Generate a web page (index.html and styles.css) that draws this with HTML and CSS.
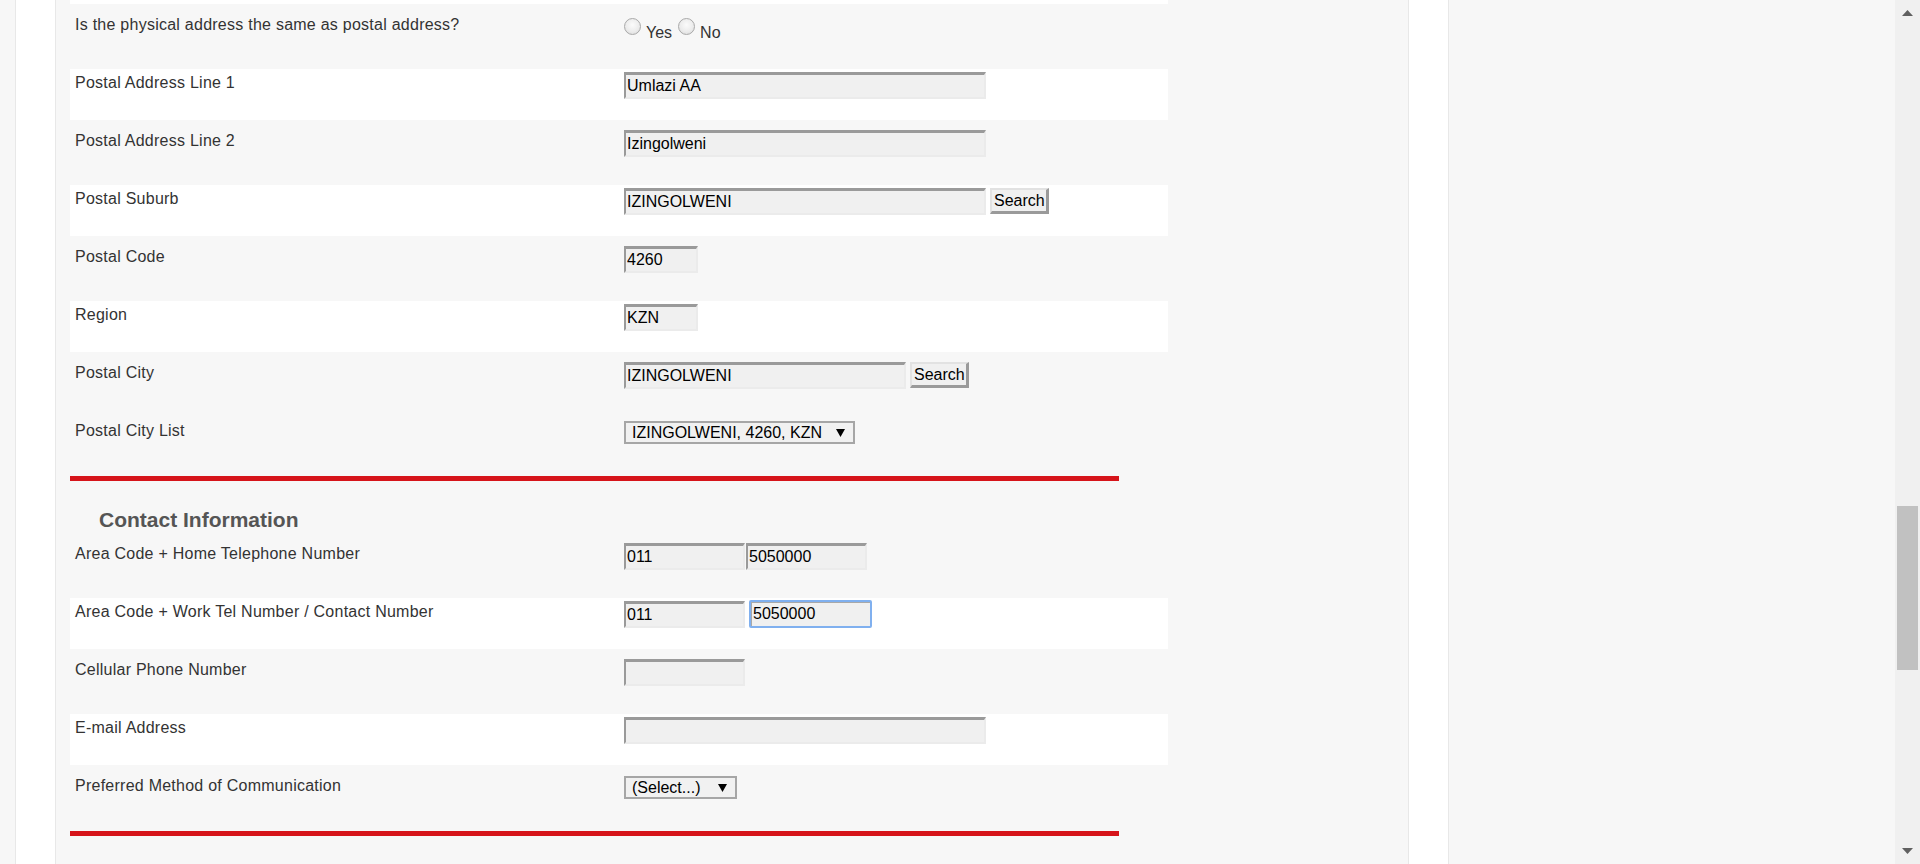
FILE: index.html
```html
<!DOCTYPE html>
<html lang="en">
<head>
<meta charset="utf-8">
<title>Postal and Contact Information</title>
<link rel="stylesheet" href="styles.css">
</head>
<body>
<div class="viewport">
  <div class="frame">
    <div class="panel">
      <div class="row-tail"></div>
      <div class="rows">
        <div class="row">
          <div class="label">Is the physical address the same as postal address?</div>
          <div class="value radios">
            <input type="radio" name="same" class="radio"><span class="radio-label">Yes</span>
            <input type="radio" name="same" class="radio"><span class="radio-label">No</span>
          </div>
        </div>
        <div class="row white">
          <div class="label">Postal Address Line 1</div>
          <div class="value"><input class="field w-long" type="text" value="Umlazi AA"></div>
        </div>
        <div class="row">
          <div class="label">Postal Address Line 2</div>
          <div class="value"><input class="field w-long" type="text" value="Izingolweni"></div>
        </div>
        <div class="row white">
          <div class="label">Postal Suburb</div>
          <div class="value"><input class="field w-long" type="text" value="IZINGOLWENI"><button class="btn" type="button">Search</button></div>
        </div>
        <div class="row">
          <div class="label">Postal Code</div>
          <div class="value"><input class="field w-tiny" type="text" value="4260"></div>
        </div>
        <div class="row white">
          <div class="label">Region</div>
          <div class="value"><input class="field w-tiny" type="text" value="KZN"></div>
        </div>
        <div class="row">
          <div class="label">Postal City</div>
          <div class="value"><input class="field w-mid" type="text" value="IZINGOLWENI"><button class="btn" type="button">Search</button></div>
        </div>
        <div class="row">
          <div class="label">Postal City List</div>
          <div class="value">
            <div class="select w-city"><span>IZINGOLWENI, 4260, KZN</span><svg class="caret" width="9" height="8" viewBox="0 0 9 8"><polygon points="0,0 9,0 4.5,8" fill="#000"/></svg></div>
          </div>
        </div>
      </div>
      <div class="divider"></div>

      <h3 class="section-title">Contact Information</h3>
      <div class="rows">
        <div class="row">
          <div class="label">Area Code + Home Telephone Number</div>
          <div class="value tight"><input class="field w-short" type="text" value="011"><input class="field w-short" type="text" value="5050000"></div>
        </div>
        <div class="row white">
          <div class="label">Area Code + Work Tel Number / Contact Number</div>
          <div class="value"><input class="field w-short" type="text" value="011"><input class="field focus" type="text" value="5050000" autofocus></div>
        </div>
        <div class="row">
          <div class="label">Cellular Phone Number</div>
          <div class="value"><input class="field w-short" type="text" value=""></div>
        </div>
        <div class="row white">
          <div class="label">E-mail Address</div>
          <div class="value"><input class="field w-long" type="text" value=""></div>
        </div>
        <div class="row">
          <div class="label">Preferred Method of Communication</div>
          <div class="value">
            <div class="select w-pref"><span>(Select...)</span><svg class="caret" width="9" height="8" viewBox="0 0 9 8"><polygon points="0,0 9,0 4.5,8" fill="#000"/></svg></div>
          </div>
        </div>
      </div>
      <div class="divider"></div>
    </div>
  </div>
</div>
<div class="scrollbar">
  <svg class="sb-up" width="11" height="6" viewBox="0 0 11 6"><polygon points="0,6 5.5,0 11,6" fill="#606060"/></svg>
  <div class="thumb"></div>
  <svg class="sb-down" width="11" height="6" viewBox="0 0 11 6"><polygon points="0,0 11,0 5.5,6" fill="#606060"/></svg>
</div>
</body>
</html>
```

FILE: styles.css
```css
* {
  box-sizing: border-box;
}

html,
body {
  margin: 0;
  height: 864px;
}

body {
  display: flex;
  overflow: hidden;
  background: #f7f7f7;
  font-family: "Liberation Sans", Arial, sans-serif;
}

.viewport {
  flex: 1;
  min-width: 0;
  height: 864px;
  overflow: hidden;
}

.frame {
  margin-left: 15px;
  width: 1434px;
  height: 100%;
  padding: 0 39px;
  background: #fff;
  border-left: 1px solid #e8e8e8;
  border-right: 1px solid #e8e8e8;
}

.panel {
  height: 100%;
  padding-left: 14px;
  background: #f7f7f7;
  border-left: 1px solid #e8e8e8;
  border-right: 1px solid #e8e8e8;
}

.row-tail {
  width: 1098px;
  height: 4px;
  margin-bottom: 7px;
  background: #fff;
}

.rows {
  display: flex;
  flex-direction: column;
  gap: 7px;
  width: 1098px;
}

.row {
  display: grid;
  grid-template-columns: 554px 1fr;
  height: 51px;
}

.row.white {
  background: #fff;
}

.label {
  padding: 5px 5px 4px;
  font-size: 16px;
  line-height: 17px;
  letter-spacing: 0.25px;
  color: #333;
}

.value {
  display: flex;
  align-items: flex-start;
  gap: 4px;
  padding-top: 3px;
}

.value.tight {
  gap: 1px;
}

.field {
  height: 27px;
  margin: 0;
  padding: 0 1px;
  border-style: solid;
  border-width: 3px 2px 2px 2px;
  border-color: #9a9a9a #ebebeb #ebebeb #9a9a9a;
  border-radius: 0;
  background: #f0f0f0;
  font: 16px "Liberation Sans", Arial, sans-serif;
  color: #000;
  caret-color: #000;
  outline: none;
}

.w-long {
  width: 362px;
}

.w-mid {
  width: 282px;
}

.w-short {
  width: 121px;
}

.w-tiny {
  width: 74px;
}

.field.focus {
  width: 123px;
  height: 28px;
  margin-top: -1px;
  padding: 0 2px;
  border: 2px solid #80b0ef;
  border-radius: 2px;
  box-shadow: inset 1px 1px 0 #a8a8a8;
}

.btn {
  height: 26px;
  margin: 0;
  padding: 0 1px 0 2px;
  border-style: solid;
  border-width: 2px 3px 3px 2px;
  border-color: #e2e2e2 #9a9a9a #9a9a9a #e2e2e2;
  background: #f0f0f0;
  font: 16px "Liberation Sans", Arial, sans-serif;
  color: #000;
}

.radios {
  gap: 0;
}

.radio {
  appearance: none;
  -webkit-appearance: none;
  flex: none;
  width: 17px;
  height: 17px;
  margin: 4px 5px 0 0;
  border: 1px solid #a9a9a9;
  border-radius: 50%;
  background: radial-gradient(circle at 50% 40%, #fbfbfb 0%, #ececec 55%, #d6d6d6 100%);
}

.radio-label {
  margin: 10px 6px 0 0;
  font-size: 16px;
  line-height: 17px;
  color: #333;
}

.select {
  display: flex;
  align-items: center;
  justify-content: space-between;
  height: 23px;
  margin-top: 1px;
  padding: 0 8px 0 6px;
  border: 2px solid #a6a6a6;
  background: #f1f1f1;
  font-size: 16px;
  line-height: 19px;
  color: #000;
}

.w-city {
  width: 231px;
}

.w-pref {
  width: 113px;
}

.caret {
  display: block;
  flex: none;
}

.divider {
  width: 1049px;
  height: 5px;
  margin-top: 8px;
  background: #d6141a;
}

.section-title {
  margin: 27px 0 8px 29px;
  font-size: 21px;
  line-height: 24px;
  font-weight: bold;
  color: #555;
}

.scrollbar {
  flex: none;
  display: flex;
  flex-direction: column;
  align-items: center;
  width: 25px;
  height: 864px;
  background: #f0f0f0;
}

.sb-up {
  display: block;
  margin-top: 10px;
}

.thumb {
  width: 21px;
  height: 164px;
  margin-top: 490px;
  background: #c1c1c1;
}

.sb-down {
  display: block;
  margin-top: auto;
  margin-bottom: 10px;
}
```
